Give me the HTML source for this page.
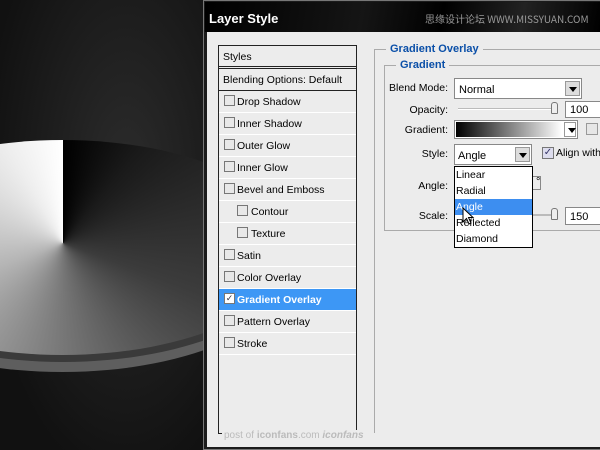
<!DOCTYPE html>
<html><head><style>
*{margin:0;padding:0;box-sizing:border-box}
body{width:600px;height:450px;overflow:hidden;position:relative;background:#1a1a1a;font-family:"Liberation Sans","DejaVu Sans",sans-serif;font-size:11px;color:#000}
.a{position:absolute}
#bg{left:0;top:0;width:210px;height:450px;background:radial-gradient(ellipse at 60% 40%,#2c2c2c,#111 80%)}
#disc{left:-170px;top:140px;width:465px;height:215px;border-radius:50%;background:conic-gradient(from 0deg at 233px 103px,#000 0deg,#1a1a1a 40deg,#3c3c3c 110deg,#777 180deg,#b5b5b5 250deg,#eee 330deg,#fff 360deg);overflow:hidden}
#rim{left:-175px;top:150px;width:475px;height:222px;border-radius:50%;background:#5e5e5e}
#rim2{left:-172px;top:146px;width:470px;height:216px;border-radius:50%;background:#3a3a3a}
#dlg{left:203px;top:0;width:400px;height:450px;background:#1b1b1b;border:1px solid #777}
#title{left:205px;top:2px;width:395px;height:30px;background:linear-gradient(100deg,#000 0%,#151515 40%,#000 60%,#222 80%,#000);color:#fff;font-weight:bold;font-size:13px;padding:9px 0 0 4px}
#body{left:207px;top:32px;width:393px;height:415px;background:#ececec}
#lp{left:218px;top:45px;width:139px;height:389px;border:1px solid #222;background:#ececec}
.row{position:absolute;left:0;width:137px;height:22px;border-bottom:1px solid #fff;padding:5px 0 0 18px;font-size:10.5px}
.cb{position:absolute;left:5px;top:4px;width:11px;height:11px;border:1px solid #777;background:#e8e8e8}
.sel{background:#3d97f5;color:#fff;font-weight:bold}
.lb{color:#0a4fa8;font-weight:bold;background:#ececec;padding:0 4px;font-size:11px}
.fs{border:1px solid #aaa;border-right:none}
.inp{background:#fff;border:1px solid #888}
.dd{position:absolute;right:1px;top:1px;width:15px;height:15px;background:#ddd;border:1px solid #999}
.dd:after{content:"";position:absolute;left:3px;top:5px;border:4px solid transparent;border-top:5px solid #000}
.r{text-align:right;width:60px;font-size:10.5px}
</style></head><body>
<div class="a" id="bg"></div>
<div class="a" id="rim"></div>
<div class="a" id="rim2"></div>
<div class="a" id="disc"></div>
<div class="a" id="dlg"></div>
<div class="a" id="title">Layer Style<span style="position:absolute;left:220px;top:9px;font-size:10px;color:#999;font-weight:normal;font-family:'Noto Sans CJK SC',sans-serif">思缘设计论坛 WWW.MISSYUAN.COM</span></div>
<div class="a" id="body"></div>
<div class="a" id="lp">
<div class="row" style="top:0;padding-left:4px;border-bottom:3px double #222;height:23px">Styles</div>
<div class="row" style="top:23px;padding-left:4px;border-bottom:1px solid #222">Blending Options: Default</div>
<div class="row" style="top:45px"><span class="cb"></span>Drop Shadow</div>
<div class="row" style="top:67px"><span class="cb"></span>Inner Shadow</div>
<div class="row" style="top:89px"><span class="cb"></span>Outer Glow</div>
<div class="row" style="top:111px"><span class="cb"></span>Inner Glow</div>
<div class="row" style="top:133px"><span class="cb"></span>Bevel and Emboss</div>
<div class="row" style="top:155px;padding-left:32px"><span class="cb" style="left:18px"></span>Contour</div>
<div class="row" style="top:177px;padding-left:32px"><span class="cb" style="left:18px"></span>Texture</div>
<div class="row" style="top:199px"><span class="cb"></span>Satin</div>
<div class="row" style="top:221px"><span class="cb"></span>Color Overlay</div>
<div class="row sel" style="top:243px"><span class="cb" style="background:#fff;color:#334;font-size:9px;line-height:9px;text-align:center">✓</span>Gradient Overlay</div>
<div class="row" style="top:265px"><span class="cb"></span>Pattern Overlay</div>
<div class="row" style="top:287px"><span class="cb"></span>Stroke</div>
</div>
<div class="a" style="left:222px;top:430px;font-size:10px;color:#bbb;background:#ececec;padding:0 2px">post of <b>iconfans</b>.com <i><b>iconfans</b></i></div>
<div class="a fs" style="left:374px;top:49px;width:230px;height:384px;border-bottom:none"></div>
<div class="a lb" style="left:386px;top:43px">Gradient Overlay</div>
<div class="a fs" style="left:384px;top:65px;width:220px;height:166px"></div>
<div class="a lb" style="left:396px;top:59px">Gradient</div>
<div class="a r" style="left:388px;top:82px">Blend Mode:</div>
<div class="a inp" style="left:454px;top:78px;width:128px;height:21px;padding:5px 4px">Normal<span class="dd" style="top:2px"></span></div>
<div class="a r" style="left:388px;top:104px">Opacity:</div>
<div class="a" style="left:458px;top:108px;width:98px;height:2px;background:#bbb;border-bottom:1px solid #fff"></div>
<div class="a" style="left:551px;top:102px;width:7px;height:12px;background:#eee;border:1px solid #777;border-radius:3px 3px 1px 1px"></div>
<div class="a inp" style="left:565px;top:101px;width:40px;height:17px;padding:2px 4px">100</div>
<div class="a r" style="left:388px;top:124px">Gradient:</div>
<div class="a inp" style="left:454px;top:120px;width:124px;height:19px;padding:1px"><div style="width:106px;height:15px;background:linear-gradient(90deg,#000,#fff)"></div><span class="dd" style="width:12px;height:15px;background:#fff"></span></div>
<div class="a" style="left:586px;top:123px;width:12px;height:12px;border:1px solid #999;background:#e6e6e6"></div>
<div class="a r" style="left:388px;top:148px">Style:</div>
<div class="a inp" style="left:454px;top:144px;width:78px;height:21px;padding:5px 3px">Angle<span class="dd" style="top:2px"></span></div>
<div class="a" style="left:542px;top:147px;width:12px;height:12px;border:1px solid #777;background:#dde;font-size:10px;line-height:10px;text-align:center;color:#336">✓</div>
<div class="a" style="left:556px;top:147px;font-size:10.5px;white-space:nowrap">Align with</div>
<div class="a r" style="left:388px;top:180px">Angle:</div>
<div class="a" style="left:533px;top:176px;width:8px;height:14px;border:1px solid #888;border-left:none"></div>
<div class="a" style="left:536px;top:176px">°</div>
<div class="a r" style="left:388px;top:210px">Scale:</div>
<div class="a" style="left:533px;top:214px;width:22px;height:2px;background:#bbb"></div>
<div class="a" style="left:551px;top:208px;width:7px;height:12px;background:#eee;border:1px solid #777;border-radius:3px 3px 1px 1px"></div>
<div class="a inp" style="left:565px;top:207px;width:40px;height:18px;padding:3px 4px">150</div>
<div class="a" style="left:454px;top:166px;width:79px;height:82px;background:#fff;border:1px solid #000;font-size:10.5px;line-height:16px">
<div style="padding-left:1px">Linear</div><div style="padding-left:1px">Radial</div><div style="background:#3d8ef0;color:#fff;padding-left:1px">Angle</div><div style="padding-left:1px">Reflected</div><div style="padding-left:1px">Diamond</div></div>
<svg class="a" style="left:462px;top:207px" width="14" height="20" viewBox="0 0 14 20"><path d="M1 1 V15 L4.5 11.5 L7 17 L9 16 L6.5 10.5 H11 Z" fill="#fff" stroke="#000" stroke-width="1"/></svg>
</body></html>
